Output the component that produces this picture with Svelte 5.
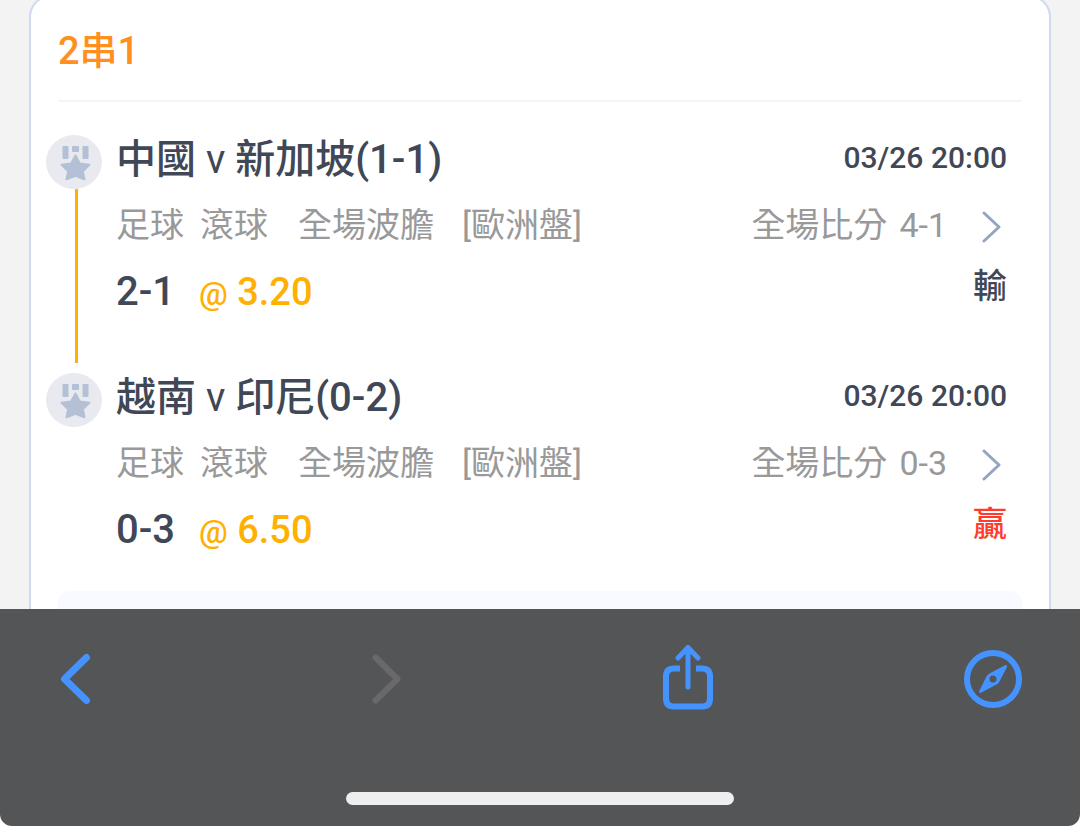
<script>
	const legs = [
		{
			home: "中國",
			away: "新加坡",
			current: "1-1",
			time: "03/26 20:00",
			tags: ["足球", "滾球"],
			market: "全場波膽",
			type: "歐洲盤",
			score: "4-1",
			pick: "2-1",
			odds: "3.20",
			won: false,
		},
		{
			home: "越南",
			away: "印尼",
			current: "0-2",
			time: "03/26 20:00",
			tags: ["足球", "滾球"],
			market: "全場波膽",
			type: "歐洲盤",
			score: "0-3",
			pick: "0-3",
			odds: "6.50",
			won: true,
		},
	];
</script>

<div class="screen">
	<main>
		<article class="card">
			<h1>2串1</h1>
			<ol>
				{#each legs as leg}
					<li>
						<div class="track">
							<svg class="badge" viewBox="0 0 56 54" aria-hidden="true">
								<ellipse cx="28" cy="27" rx="28" ry="27" fill="#e8eaef" />
								<g fill="#b3c0d6">
									<rect x="16.500" y="11" width="6" height="13" rx="1" />
									<rect x="26" y="11" width="7" height="6" rx="1" />
									<rect x="36.500" y="11" width="6" height="13" rx="1" />
								</g>
								<path
									d="M29.500 20.500l4.400 8 9.600 1.300-6.700 6.500 1.700 8-9-3.600-9 3.600 1.700-8-6.700-6.500 9.600-1.300z"
									fill="#b3c0d6"
									stroke="#b3c0d6"
									stroke-width="2"
									stroke-linejoin="round"
								/>
							</svg>
							<span class="line"></span>
						</div>
						<div class="info">
							<div class="row teams">
								<h2>{leg.home} <span class="versus">v</span> {leg.away}({leg.current})</h2>
								<time>{leg.time}</time>
							</div>
							<div class="row detail">
								<p class="tags">
									{#each leg.tags as tag}
										<span>{tag}</span>
									{/each}
								</p>
								<p class="market">{leg.market}</p>
								<p>[{leg.type}]</p>
								<p class="score"><span>全場比分</span> <span>{leg.score}</span></p>
								<button type="button" aria-label="詳情">
									<svg width="20" height="34" viewBox="0 0 20 34" fill="none">
										<path
											d="M3 3l15 14L3 31"
											stroke="#94a5bf"
											stroke-width="3"
											stroke-linecap="round"
											stroke-linejoin="round"
										/>
									</svg>
								</button>
							</div>
							<div class="row bet">
								<strong>{leg.pick}</strong>
								<span class="odds"><small>@</small> {leg.odds}</span>
								<span class="result" class:won={leg.won}>{leg.won ? "贏" : "輸"}</span>
							</div>
						</div>
					</li>
				{/each}
			</ol>
			<div class="summary"></div>
		</article>
	</main>

	<nav>
		<div class="tools">
			<button type="button" aria-label="上一頁">
				<svg width="60" height="72" viewBox="0 0 60 72" fill="none">
					<path
						d="M41.500 14.500L19.500 36L41.500 57.500"
						stroke="#4593ff"
						stroke-width="7"
						stroke-linecap="round"
						stroke-linejoin="round"
					/>
				</svg>
			</button>
			<button type="button" aria-label="下一頁" disabled>
				<svg width="60" height="72" viewBox="0 0 60 72" fill="none">
					<path
						d="M24.500 14.500L46.500 36L24.500 57.500"
						stroke="#69696b"
						stroke-width="6"
						stroke-linecap="round"
						stroke-linejoin="round"
					/>
				</svg>
			</button>
			<button type="button" aria-label="分享">
				<svg width="60" height="72" viewBox="0 0 60 72" fill="none" stroke="#4593ff">
					<path
						d="M23 25.500h-6q-8 0-8 8v22q0 8 8 8h28q8 0 8-8v-22q0-8-8-8h-6"
						stroke-width="6"
					/>
					<path
						d="M31 44V5M21 15L31 4.500L41 15"
						stroke-width="5"
						stroke-linecap="round"
						stroke-linejoin="round"
					/>
				</svg>
			</button>
			<button type="button" aria-label="Safari">
				<svg width="60" height="72" viewBox="0 0 60 72" fill="none">
					<circle cx="30" cy="36" r="26" stroke="#4593ff" stroke-width="6" />
					<path
						fill-rule="evenodd"
						d="M44 24L36.500 38.500Q35.500 40.500 33.500 41.500L18 49.800Q15.500 50.500 16.200 48L23.500 33.500Q24.500 31.500 26.500 30.500L42 22.200Q44.800 21.500 44 24zM30 32.500a3.500 3.500 0 100 7 3.500 3.500 0 000-7z"
						fill="#4593ff"
					/>
				</svg>
			</button>
		</div>
		<div class="home"></div>
	</nav>
</div>

<style>
	:global(body) {
		background: #fff;
	}

	.screen {
		display: flex;
		flex-direction: column;
		min-height: 100vh;
		font-family: Roboto, "Noto Sans CJK TC", sans-serif;
		font-weight: 500;
		color: #404756;
	}

	main {
		padding: 0 29px;
		background: #f3f3f3;
		overflow: hidden;
	}

	.card {
		margin-top: -5px;
		padding: 5px 27px 0;
		background: #fff;
		border: 2px solid #cfdaee;
		border-bottom: 0;
		border-radius: 22px 22px 0 0;
	}

	h1,
	h2,
	p,
	ol {
		margin: 0;
		padding: 0;
		font-weight: inherit;
	}

	h1 {
		font-size: 38px;
		line-height: 98px;
		color: #ff8f1f;
		border-bottom: 2px solid #f4f5fb;
	}

	ol {
		list-style: none;
		padding: 33px 15px 14px 0;
		margin-left: -12px;
	}

	li {
		display: flex;
		gap: 14px;
	}

	li + li {
		margin-top: 10px;
	}

	.track {
		display: flex;
		flex-direction: column;
		align-items: center;
		flex: none;
		width: 56px;
	}

	.badge {
		width: 56px;
		height: 54px;
	}

	.line {
		flex: 1;
		width: 3px;
		margin-left: 4px;
		background: #ffb000;
	}

	li:last-child .line {
		display: none;
	}

	.info {
		flex: 1;
		min-height: 228px;
		white-space: nowrap;
	}

	li:last-child .info {
		min-height: 204px;
	}

	.row {
		display: flex;
	}

	.teams {
		justify-content: space-between;
		line-height: 50px;
	}

	h2 {
		font-size: 40px;
	}

	.versus {
		font-weight: 400;
	}

	time {
		font-size: 30px;
		line-height: 46px;
	}

	.detail {
		align-items: center;
		font-size: 34px;
		font-weight: 400;
		line-height: 80px;
		color: #999;
	}

	.tags {
		display: flex;
		gap: 16px;
	}

	.market {
		margin: 0 28px 0 30px;
	}

	.score {
		display: flex;
		gap: 12px;
		margin-left: auto;
	}

	button {
		display: flex;
		padding: 0;
		border: 0;
		background: none;
	}

	.detail button {
		margin: 4px 6px 0 34px;
	}

	.bet {
		gap: 24px;
		font-size: 40px;
		line-height: 54px;
	}

	strong {
		font-weight: 500;
	}

	.odds {
		font-size: 38px;
		color: #ffb000;
	}

	small {
		font-size: 32px;
	}

	.result {
		margin-left: auto;
		font-size: 34px;
		line-height: 42px;
	}

	.won {
		color: #ff3b30;
	}

	.summary {
		height: 18px;
		background: #f9faff;
		border-radius: 12px 12px 0 0;
	}

	nav {
		flex: 1;
		display: flex;
		flex-direction: column;
		justify-content: space-between;
		padding: 34px 0 21px;
		background: #545557;
		border-radius: 0 0 12px 12px;
	}

	.tools {
		display: flex;
		justify-content: space-between;
		padding: 0 57px 0 45px;
	}

	.home {
		align-self: center;
		width: 36%;
		height: 13px;
		background: #eee;
		border-radius: 7px;
	}
</style>
